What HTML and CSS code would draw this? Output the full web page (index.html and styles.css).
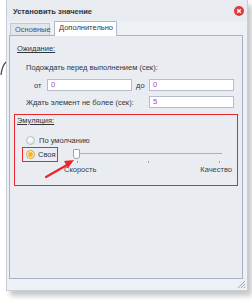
FILE: index.html
```html
<!DOCTYPE html>
<html lang="ru">
<head>
    <meta charset="UTF-8">
    <title>Установить значение</title>
    <link rel="stylesheet" href="styles.css">
</head>
<body>
    <!-- Edge of something behind the dialog -->
    <svg class="bg-curve" width="8" height="20" viewBox="0 0 8 20">
        <path d="M6 2 Q2 6 1 15" fill="none" stroke="#444" stroke-width="1.2"/>
    </svg>

    <div class="window">
        <div class="titlebar">
            <span class="title">Установить значение</span>
            <span class="close">
                <svg width="10" height="10" viewBox="0 0 10 10">
                    <circle cx="5" cy="5" r="5" fill="#e0383c"/>
                    <path d="M3.2 3.2 L6.8 6.8 M6.8 3.2 L3.2 6.8" stroke="#fff" stroke-width="1.4"/>
                </svg>
            </span>
        </div>

        <div class="tabs">
            <div class="tab">Основные</div>
            <div class="tab active">Дополнительно</div>
        </div>

        <div class="panel">
            <div class="heading">Ожидание:</div>
            <div class="line indent">Подождать перед выполнением (сек):</div>
            <div class="field-row">
                <span class="lbl-ot">от</span>
                <span class="input">0</span>
                <span class="lbl-do">до</span>
                <span class="input">0</span>
            </div>
            <div class="field-row second">
                <span class="lbl-wait">Ждать элемент не более (сек):</span>
                <span class="input">5</span>
            </div>

            <div class="group">
                <div class="heading small">Эмуляция:</div>
                <div class="radio-row">
                    <span class="radio"></span>
                    <span>По умолчанию</span>
                </div>
                <div class="custom-row">
                    <div class="custom-label">
                        <span class="radio checked"></span>
                        <span>Своя</span>
                    </div>
                    <div class="slider">
                        <div class="track"></div>
                        <div class="thumb"></div>
                        <div class="ticks">
                            <span></span><span></span><span></span>
                        </div>
                    </div>
                </div>
                <div class="slider-labels">
                    <span>Скорость</span>
                    <span>Качество</span>
                </div>

                <!-- Annotation arrow -->
                <svg class="arrow" width="34" height="24" viewBox="0 0 34 24">
                    <path d="M2 21 L23 9" stroke="#e8262b" stroke-width="2.2" stroke-linecap="round"/>
                    <polygon points="30,4 24,12 20,5" fill="#e8262b"/>
                </svg>
            </div>
        </div>

        <div class="grip">
            <svg width="9" height="9" viewBox="0 0 9 9">
                <path d="M8 1 L1 8 M8 4 L4 8 M8 7 L7 8" stroke="#9aa3ae" stroke-width="1"/>
            </svg>
        </div>
    </div>
</body>
</html>
```

FILE: styles.css
```css
* {
    margin: 0;
    padding: 0;
    box-sizing: border-box;
}

body {
    background: #ffffff;
    font-family: "Liberation Sans", Arial, sans-serif;
    font-size: 7.5px;
    color: #2f363f;
    position: relative;
    width: 252px;
    height: 300px;
    overflow: hidden;
}

.bg-curve {
    position: absolute;
    left: 0;
    top: 60px;
}

/* Dialog window */
.window {
    position: relative;
    margin-left: 6px;
    width: 242px;
    height: 291px;
    background: #edf0f4;
    border: 1px solid #c8ced6;
    border-top: none;
    box-shadow: 4px 5px 5px rgba(0, 0, 0, 0.22);
    display: flex;
    flex-direction: column;
}

.titlebar {
    height: 21px;
    display: flex;
    align-items: center;
    justify-content: space-between;
    padding: 1px 3px 0 6px;
    background: #e8ecf0;
}

.title {
    font-weight: bold;
    color: #2c333c;
}

.close {
    display: flex;
}

.tabs {
    height: 14px;
    display: flex;
    align-items: flex-end;
    gap: 4px;
    padding-left: 3px;
}

.tab {
    height: 12px;
    padding: 0 4px;
    width: 40px;
    line-height: 12px;
    background: #e2e6eb;
    border: 1px solid #c4cad3;
    border-bottom: none;
    color: #4a525c;
}

.tab.active {
    height: 15px;
    width: 63px;
    margin-bottom: -1px;
    background: #ffffff;
    border-color: #b2bac6;
    color: #2f363f;
    position: relative;
    z-index: 1;
}

.panel {
    margin: 0 4px 0 2px;
    height: 244px;
    border: 1px solid #a9b2c0;
    background: #e9edf2;
    padding: 8px 0 0 4px;
}

.heading {
    height: 10px;
    line-height: 10px;
    margin-left: 3px;
    text-decoration: underline;
}

.line {
    height: 10px;
    line-height: 10px;
}

.indent {
    margin: 9px 0 0 12px;
}

.field-row {
    display: flex;
    align-items: center;
    height: 12px;
    margin-top: 6px;
}

.field-row.second {
    margin-top: 5px;
}

.input {
    width: 85px;
    height: 12px;
    line-height: 10px;
    padding-left: 3px;
    background: #ffffff;
    border: 1px solid #b5bdc8;
    color: #b144c4;
}

.lbl-ot {
    margin-left: 20px;
    width: 13px;
}

.lbl-do {
    margin-left: 4px;
    width: 13px;
}

.lbl-wait {
    margin-left: 12px;
    width: 123px;
}

/* Emulation group, highlighted */
.group {
    position: relative;
    margin-top: 6px;
    width: 224px;
    height: 72px;
    border: 1px solid #e8262b;
    padding: 1px 0 0 0;
}

.heading.small {
    margin-left: 2px;
}

.radio-row {
    display: flex;
    align-items: center;
    gap: 4px;
    height: 10px;
    margin: 9px 0 0 11px;
}

.radio {
    width: 9px;
    height: 9px;
    border-radius: 50%;
    border: 1px solid #b9c0c9;
    background: radial-gradient(circle at 40% 35%, #ffffff, #d7dce2);
}

.radio.checked {
    border-color: #c9a24a;
    background: radial-gradient(circle, #f5b325 0 2px, #fff6d8 3px, #ece6d2 100%);
}

.custom-row {
    display: flex;
    align-items: flex-start;
    margin-top: 2px;
    height: 16px;
}

.custom-label {
    display: flex;
    align-items: center;
    gap: 3px;
    margin-left: 7px;
    padding-left: 3px;
    width: 36px;
    height: 15px;
    border: 1.5px solid #e8262b;
}

.slider {
    position: relative;
    margin-left: 15px;
    width: 149px;
    padding-top: 6px;
}

.track {
    height: 1px;
    margin-left: 4px;
    background: #aab2bd;
}

.thumb {
    position: absolute;
    left: 0;
    top: 2px;
    width: 7px;
    height: 10px;
    background: #ffffff;
    border: 1px solid #9aa3ae;
    border-radius: 1px 1px 3px 3px;
}

.ticks {
    display: flex;
    justify-content: space-between;
    margin: 7px 0 0 4px;
    width: 143px;
}

.ticks span {
    width: 1px;
    height: 2px;
    background: #9aa3ae;
}

.slider-labels {
    display: flex;
    justify-content: space-between;
    width: 168px;
    margin: 2px 0 0 49px;
    height: 10px;
    line-height: 10px;
    color: #3b424c;
}

.arrow {
    position: absolute;
    left: 29px;
    top: 41px;
}

.grip {
    position: absolute;
    right: 1px;
    bottom: 1px;
    display: flex;
}
```
